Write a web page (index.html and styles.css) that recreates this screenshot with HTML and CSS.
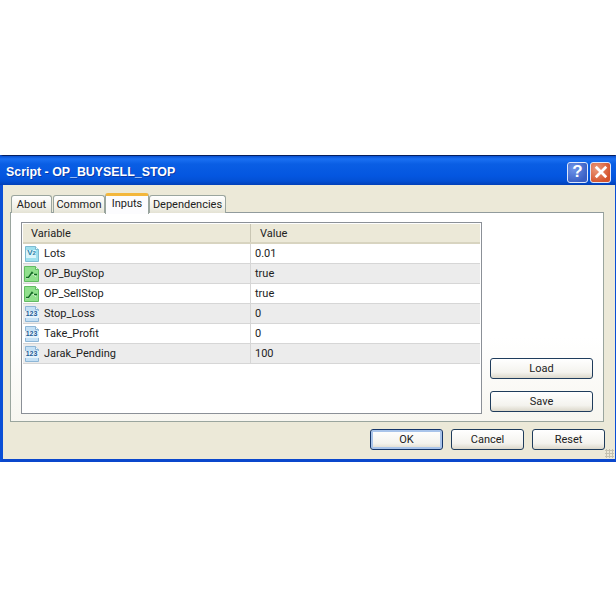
FILE: index.html
```html
<!DOCTYPE html>
<html lang="en">
<head>
<meta charset="utf-8">
<title>Script - OP_BUYSELL_STOP</title>
<link rel="stylesheet" href="styles.css">
</head>
<body>
<svg class="defs" width="0" height="0" aria-hidden="true">
  <defs>
    <symbol id="doc-blue" viewBox="0 0 16 16">
      <path d="M1.500.5h10l3 3v12h-13z" fill="#c4e0f5" stroke="#8db6d6"/>
      <path d="M11.500.5v3h3" fill="#f0f8fd" stroke="#8db6d6"/>
      <rect x="1" y="5" width="14" height="7" fill="#e6f3fb"/>
    </symbol>
    <symbol id="doc-val" viewBox="0 0 16 16">
      <path d="M1.500.5h10l3 3v12h-13z" fill="#9fe0ee" stroke="#7dbbd2"/>
      <path d="M11.500.5v3h3" fill="#eafaff" stroke="#7dbbd2"/>
      <rect x="2" y="4" width="10" height="8" fill="#dcf5fa"/>
    </symbol>
    <symbol id="doc-green" viewBox="0 0 16 16">
      <path d="M.5.5h11l3 3v12H.5z" fill="#90e08c" stroke="#62bb62"/>
      <path d="M11.500.5v3h3" fill="#e6fbe4" stroke="#62bb62"/>
      <path d="M2 12.500h2.500l3.500-5 4 3" fill="none" stroke="#e8fbe6" stroke-width="1"/>
      <path d="M2 11.500h2.500l3.500-5 1 1M10 8.500h3" fill="none" stroke="#146b26" stroke-width="1.500"/>
    </symbol>
  </defs>
</svg>
<main class="window">
  <header class="titlebar">
    <h1 class="title">Script - OP_BUYSELL_STOP</h1>
    <div class="caption-buttons">
      <span class="cap cap-help">?</span>
      <span class="cap cap-close">
        <svg viewBox="0 0 12 12" width="14" height="14"><path d="M1.500 1.500l9 9M10.500 1.500l-9 9" stroke="#fff" stroke-width="2.400"/></svg>
      </span>
    </div>
  </header>
  <div class="client">
    <nav class="tabs">
      <span class="tab tab-about">About</span>
      <span class="tab tab-common">Common</span>
      <span class="tab tab-inputs">Inputs</span>
      <span class="tab tab-deps">Dependencies</span>
    </nav>
    <section class="panel">
      <div class="grid">
        <div class="row head">
          <div class="cell var head-var">Variable</div>
          <div class="cell head-val">Value</div>
        </div>
        <div class="row">
          <div class="cell var"><svg class="ico"><use href="#doc-val"/></svg><span class="ico-txt val-txt">V<small>2</small></span>Lots</div>
          <div class="cell">0.01</div>
        </div>
        <div class="row alt">
          <div class="cell var"><svg class="ico"><use href="#doc-green"/></svg>OP_BuyStop</div>
          <div class="cell">true</div>
        </div>
        <div class="row">
          <div class="cell var"><svg class="ico"><use href="#doc-green"/></svg>OP_SellStop</div>
          <div class="cell">true</div>
        </div>
        <div class="row alt">
          <div class="cell var"><svg class="ico"><use href="#doc-blue"/></svg><span class="ico-txt">123</span>Stop_Loss</div>
          <div class="cell">0</div>
        </div>
        <div class="row">
          <div class="cell var"><svg class="ico"><use href="#doc-blue"/></svg><span class="ico-txt">123</span>Take_Profit</div>
          <div class="cell">0</div>
        </div>
        <div class="row alt">
          <div class="cell var"><svg class="ico"><use href="#doc-blue"/></svg><span class="ico-txt">123</span>Jarak_Pending</div>
          <div class="cell">100</div>
        </div>
      </div>
      <div class="side">
        <button class="btn side-btn" type="button">Load</button>
        <button class="btn side-btn" type="button">Save</button>
      </div>
    </section>
    <footer class="actions">
      <button class="btn act default" type="button">OK</button>
      <button class="btn act" type="button">Cancel</button>
      <button class="btn act" type="button">Reset</button>
    </footer>
    <div class="grip"></div>
  </div>
</main>
</body>
</html>
```
FILE: styles.css
```css
* { box-sizing: border-box; }
html, body { margin: 0; background: #fff; }
body { padding-top: 155px; height: 616px; overflow: hidden; font-family: Roboto, "Liberation Sans", Arial, sans-serif; font-size: 11px; color: #222; }
.defs { display: block; height: 0; }

.window { height: 307px; display: flex; flex-direction: column; background: #0a52d8; border-top: 1px solid #06205e; border-bottom: 3px solid #0a47cc; border-left: 3px solid #0a4fd6; border-right: 1px solid #0a4fd6; }

.titlebar { height: 29px; margin: 0 -1px 0 -3px; padding: 3px 5px 0 6px; flex: none; display: flex; align-items: center; justify-content: space-between;
  background: linear-gradient(#0a50d0 0, #1a70f2 3px, #0a5ee4 8px, #0456e0 20px, #0350d4 25px, #0240b8 29px); }
.title { margin: 0; color: #fff; font-family: "Liberation Sans", Arial, sans-serif; font-size: 12.400px; font-weight: 700; text-shadow: 1px 1px 0 #0a3aa8; }
.caption-buttons { display: flex; gap: 2px; }
.cap { width: 21px; height: 21px; border: 1px solid #dfe8fb; border-radius: 3px; display: flex; align-items: center; justify-content: center; color: #fff; font-family: "Liberation Sans", Arial, sans-serif; font-size: 17px; font-weight: 700; }
.cap-help { background: radial-gradient(circle at 30% 30%, #6f95ea, #3a5fc4 75%); }
.cap-close { background: radial-gradient(circle at 30% 30%, #ec9a7c, #d4532c 75%); }

.client { flex: 1; position: relative; display: flex; flex-direction: column; background: #ece9d8; padding: 8px 11px 0 7px; }

.tabs { height: 20px; display: flex; align-items: flex-end; padding-left: 1px; position: relative; z-index: 1; margin-bottom: -1px; }
.tab { height: 18px; margin-right: 1px; display: flex; align-items: center; justify-content: center; background: linear-gradient(#fff, #f0efe6 70%, #e4e2d4); border: 1px solid #9aa59e; border-bottom: 0; border-radius: 3px 3px 0 0; }
.tab-about { width: 41px; }
.tab-common { width: 52px; margin-right: 0; }
.tab-deps { width: 77px; }
.tab-inputs { width: 44px; height: 21px; margin-right: 0; margin-bottom: -1px; padding-bottom: 3px; background: #fcfcfe; border-top: 3px solid #f3b73c; }

.panel { height: 210px; flex: none; display: flex; background: linear-gradient(#fff 60%, #f7f6f0); border: 1px solid #9aa59e; border-top-color: #919b9c; padding: 9px 10px 7px 10px; gap: 8px; }

.grid { width: 461px; height: 192px; background: #fff; border: 1px solid #8b9097; padding: 1px 1px 0; }
.row { height: 20px; display: grid; grid-template-columns: 228px 1fr; border-bottom: 1px solid #d6d6d6; }
.row.alt { background: #ececec; }
.row.head { height: 20px; background: #ece9d8; border-bottom: 2px solid #d8d4c0; }
.cell { display: flex; align-items: center; position: relative; padding-left: 4px; white-space: nowrap; }
.cell.var { padding-left: 1px; border-right: 1px solid #d6d6d6; }
.head .cell.var { border-right: 1px solid #c9c6b4; }
.head-var { padding-left: 8px !important; }
.head-val { padding-left: 9px; }
.ico { width: 16px; height: 16px; margin-right: 4px; flex: none; }
.ico-txt { position: absolute; left: 1px; width: 15px; text-align: center; color: #1f5c96; font: 700 7px "Liberation Sans", sans-serif; }
.val-txt { color: #2a7fa8; font-size: 8px; top: 4px; }
.val-txt small { font-size: 6px; }

.side { flex: 1; display: flex; flex-direction: column; justify-content: flex-end; gap: 12px; padding-bottom: 2px; }
.btn { font: inherit; color: #222; background: linear-gradient(#fff, #f4f3ee 70%, #dcd8cb); border: 1px solid #1f3c5c; border-radius: 3px; padding: 0; }
.side-btn { width: 103px; height: 21px; }

.actions { display: flex; justify-content: flex-end; gap: 8px; padding-top: 7px; margin-right: -1px; }
.act { width: 73px; height: 21px; }
.act.default { border-color: #16366a; box-shadow: inset 0 0 0 2px #a9c4ea; }
.grip { position: absolute; right: 1px; bottom: 1px; width: 9px; height: 9px; background: radial-gradient(circle, #c4c1b0 1px, transparent 1.200px) 0 0 / 3px 3px; }
```
